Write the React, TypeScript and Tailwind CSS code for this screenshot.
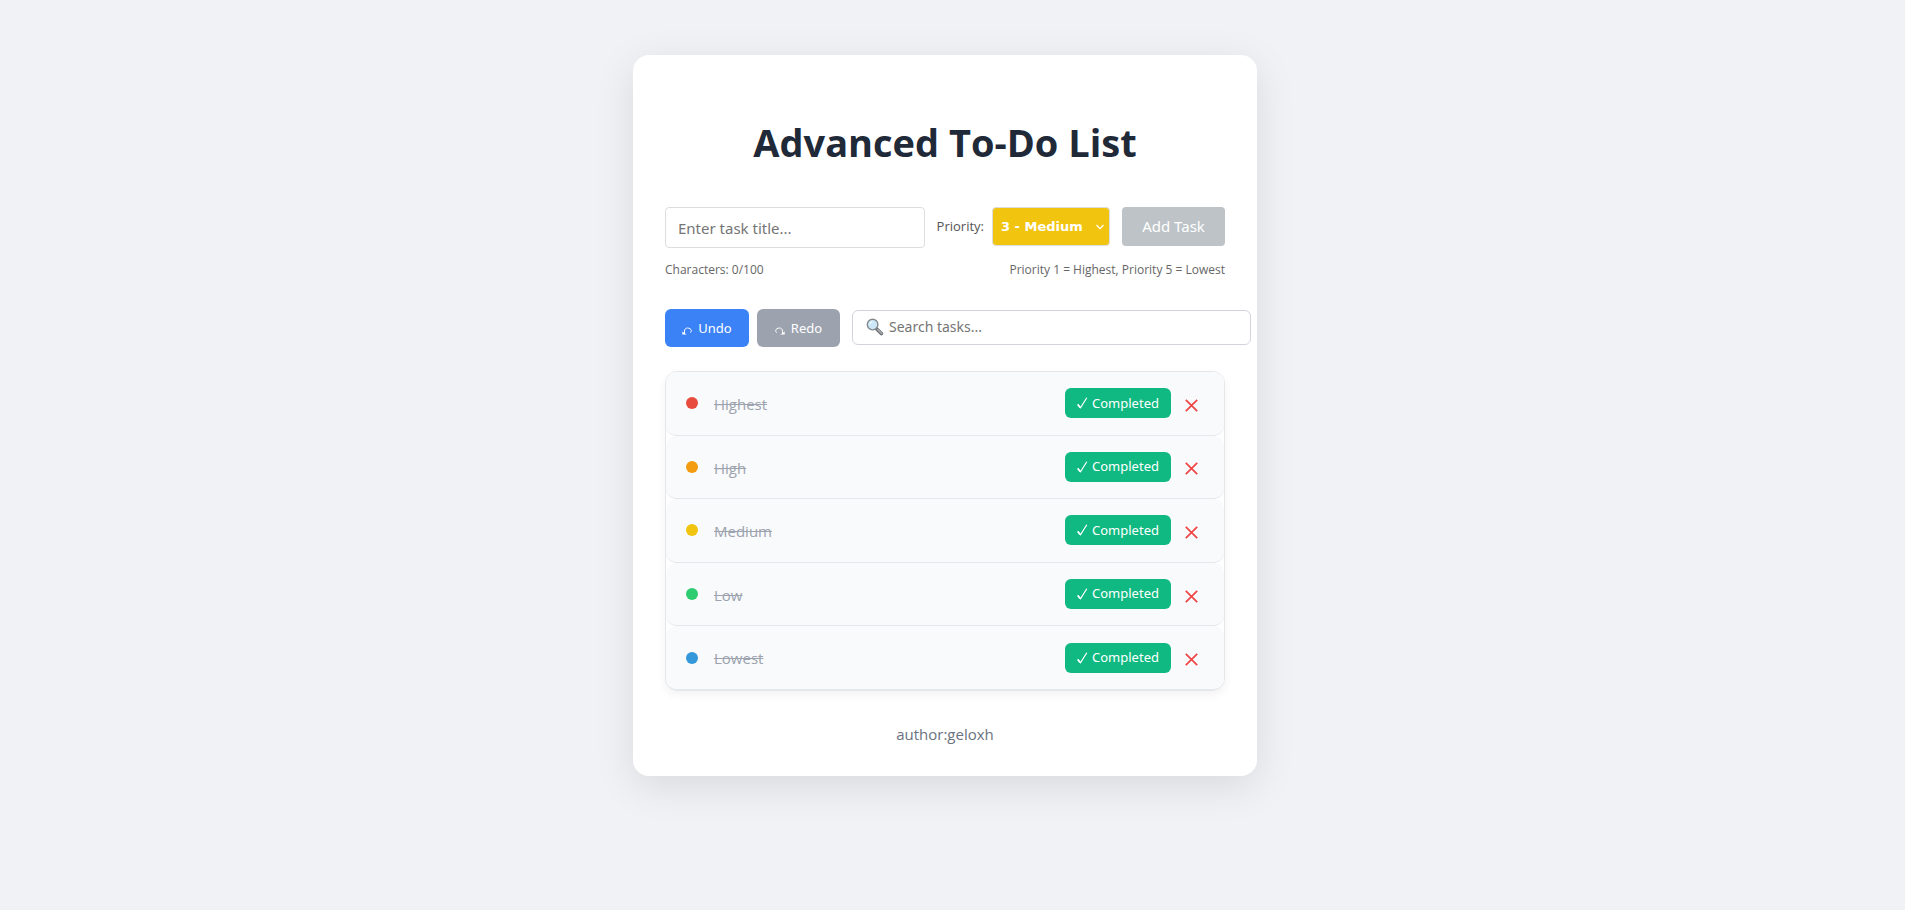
import { useState } from "react";

const tasks = [
  { title: "Highest", dot: "bg-[#e74c3c]" },
  { title: "High", dot: "bg-[#f39c12]" },
  { title: "Medium", dot: "bg-[#f1c40f]" },
  { title: "Low", dot: "bg-[#2ecc71]" },
  { title: "Lowest", dot: "bg-[#3498db]" },
];

function Curl({ flip = false }: { flip?: boolean }) {
  return (
    <svg
      viewBox="0 0 10 8"
      className={flip ? "mt-1 h-2 w-2.5 -scale-x-100" : "mt-1 h-2 w-2.5"}
      fill="none"
      stroke="currentColor"
      aria-hidden="true"
    >
      <path d="M2.500 6.500V4.200C2.500 2.100 3.900 1 5.600 1S9.300 2 9.300 3.700c0 .8-.3 1.500-.9 1.900" />
      <path d="M.3 4.600V7.500H4.700z" fill="currentColor" stroke="none" />
    </svg>
  );
}

function Magnifier() {
  return (
    <svg viewBox="0 0 18 18" className="size-[18px] shrink-0" aria-hidden="true">
      <path d="m11 11.200 4.400 4.400" stroke="#6b6f73" strokeWidth="3.600" strokeLinecap="round" />
      <path d="m11.800 11.600 3.800 3.800" stroke="#a7a9ab" strokeWidth="1.600" strokeLinecap="round" />
      <circle cx="6.600" cy="6.600" r="5.300" fill="#cbe7f8" stroke="#85898d" strokeWidth="1.400" />
      <path d="M3.800 6.400c.2-1.500 1.200-2.500 2.700-2.700" stroke="#eef8fe" strokeWidth="1.200" fill="none" />
    </svg>
  );
}

export default function App() {
  const [title, setTitle] = useState("");
  const [query, setQuery] = useState("");

  return (
    <div className="min-h-screen bg-[#f0f2f5] py-[55px] pr-[31px] pl-4 font-['Open_Sans','Noto_Sans',sans-serif] text-[#333]">
      <main className="mx-auto max-w-[624px] rounded-2xl bg-white px-8 pt-[63px] pb-[30px] shadow-[0_10px_40px_rgba(0,0,0,0.1)]">
        <h1 className="text-center text-[38px] leading-[48px] font-bold text-[#1f2937]">
          Advanced To-Do List
        </h1>

        <form className="mt-[41px] flex items-start gap-3" onSubmit={(e) => e.preventDefault()}>
          <input
            aria-label="Task title"
            placeholder="Enter task title..."
            maxLength={100}
            value={title}
            onChange={(e) => setTitle(e.target.value)}
            className="h-[41px] min-w-0 flex-1 rounded border border-[#ddd] px-3 font-['Noto_Sans',sans-serif] text-[15px] placeholder:text-[#757575]"
          />
          <div className="flex h-[39px] items-center gap-2">
            <label htmlFor="priority" className="text-[13px] text-[#555]">
              Priority:
            </label>
            <div className="relative h-full">
              <select
                id="priority"
                defaultValue="3"
                className="h-full w-[118px] appearance-none rounded border border-[#ddd] bg-[#f1c40f] px-2 font-['DejaVu_Sans',sans-serif] text-[13px] font-bold text-white"
              >
                <option value="1">1 - Highest</option>
                <option value="2">2 - High</option>
                <option value="3">3 - Medium</option>
                <option value="4">4 - Low</option>
                <option value="5">5 - Lowest</option>
              </select>
              <svg
                viewBox="0 0 8 6"
                className="pointer-events-none absolute top-[17px] right-[6px] h-1.5 w-2"
                fill="none"
                stroke="white"
                strokeWidth="1.200"
                aria-hidden="true"
              >
                <path d="m.5 1 3.500 3.600L7.500 1" />
              </svg>
            </div>
          </div>
          <button
            type="submit"
            className="h-[39px] w-[103px] rounded bg-[#bdc3c7] font-['Noto_Sans',sans-serif] text-[15px] text-white"
          >
            Add Task
          </button>
        </form>

        <div className="mt-3 flex justify-between text-xs leading-5 text-[#666]">
          <span>Characters: {title.length}/100</span>
          <span>Priority 1 = Highest, Priority 5 = Lowest</span>
        </div>

        <div className="-mr-[26px] mt-[29px] flex items-center gap-3">
          <div className="flex gap-2 font-['Noto_Sans',sans-serif] text-[13px] text-white">
            <button
              type="button"
              className="flex h-[38px] w-[84px] items-center justify-center gap-1.5 rounded-md bg-[#3b82f6] pt-0.5"
            >
              <Curl />
              Undo
            </button>
            <button
              type="button"
              className="flex h-[38px] w-[83px] items-center justify-center gap-1.5 rounded-md bg-[#9ca3af] pt-0.5"
            >
              <Curl flip />
              Redo
            </button>
          </div>
          <label className="mb-0.5 flex h-[35px] min-w-0 flex-1 items-center gap-[5px] rounded-md border border-[#d1d5db] px-[13px]">
            <Magnifier />
            <input
              aria-label="Search tasks"
              placeholder="Search tasks..."
              value={query}
              onChange={(e) => setQuery(e.target.value)}
              className="min-w-0 flex-1 font-['Noto_Sans',sans-serif] text-sm outline-none placeholder:text-[#757575]"
            />
          </label>
        </div>

        <ul className="mt-6 flex min-h-80 flex-col rounded-xl border border-[#e5e7eb] shadow-[0_4px_10px_rgba(0,0,0,0.05)]">
          {tasks.map((task) => (
            <li
              key={task.title}
              className="flex flex-1 items-center rounded-[10px] border-b border-[#e5e7eb] bg-[#f9fafb] px-5"
            >
              <span className={`size-3 rounded-full ${task.dot}`} />
              <span className="ml-4 flex-1 pt-0.5 text-[15px] text-[#9ca3af] line-through">
                {task.title}
              </span>
              <button
                type="button"
                className="flex h-[30px] w-[106px] items-center justify-center gap-1 rounded-md bg-[#10b981] font-['Noto_Sans',sans-serif] text-[13px] text-white"
              >
                <svg viewBox="0 0 11 12" className="h-3 w-[11px]" fill="none" stroke="currentColor" aria-hidden="true">
                  <path d="M.8 7.400 3.500 10.800 9.800.8" strokeWidth="1.200" />
                  <path d="m.8 7.400 2.300 3" strokeWidth="1.600" />
                </svg>
                Completed
              </button>
              <button type="button" aria-label={`Delete ${task.title}`} className="mt-1 ml-2 p-1.5 text-[#ef4444]">
                <svg viewBox="0 0 13 13" className="size-[13px]" fill="none" stroke="currentColor" strokeWidth="1.700" aria-hidden="true">
                  <path d="m.8.8 11.400 11.400m0-11.400L.8 12.200" />
                </svg>
              </button>
            </li>
          ))}
        </ul>

        <footer className="mt-[31px] text-center text-[15px] leading-6 text-[#6b7280]">author:geloxh</footer>
      </main>
    </div>
  );
}
